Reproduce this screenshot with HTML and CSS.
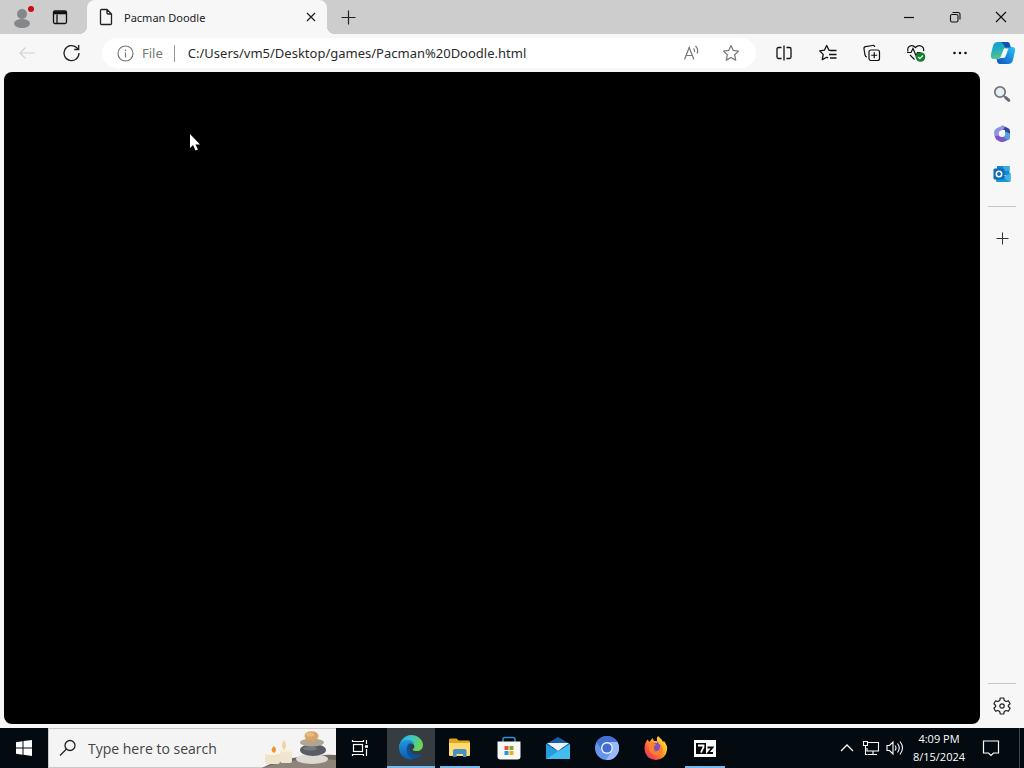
FILE: index.html
```html
<!DOCTYPE html>
<html lang="en">
<head>
<meta charset="utf-8">
<title>Pacman Doodle</title>
<link rel="stylesheet" href="styles.css">
</head>
<body>
<header class="titlebar">
  <button class="profile" aria-label="Profile">
    <svg width="24" height="24" viewBox="0 0 24 24"><circle cx="11" cy="9" r="5" fill="#85878a"/><ellipse cx="11" cy="18.500" rx="8" ry="4.500" fill="#85878a"/><circle cx="20" cy="4" r="3" fill="#c50b17"/></svg>
  </button>
  <button class="workspaces" aria-label="Tab actions">
    <svg width="16" height="16" viewBox="0 0 16 16" fill="none" stroke="#111" stroke-width="1.300"><rect x="1.500" y="2" width="13" height="12.500" rx="1.500"/><path d="M5 5.500v9"/><path d="M2 3.800h12" stroke-width="3"/></svg>
  </button>
  <div class="tab">
    <svg width="16" height="18" viewBox="0 0 16 18" fill="none" stroke="#222" stroke-width="1.300" stroke-linejoin="round"><path d="M3.500 1.500h5.500l4.500 4.500v9.500q0 1-1 1h-9q-1 0-1-1v-13q0-1 1-1zM9 1.500v3.500q0 1 1 1h3.500"/></svg>
    <span class="tab-title">Pacman Doodle</span>
    <button class="tab-close" aria-label="Close tab"><svg width="10" height="10" viewBox="0 0 10 10" stroke="#222" stroke-width="1.300"><path d="M1 1l8 8M9 1l-8 8"/></svg></button>
  </div>
  <button class="new-tab" aria-label="New tab"><svg width="15" height="15" viewBox="0 0 15 15" stroke="#222" stroke-width="1.200"><path d="M7.500 .500v14M.500 7.500h14"/></svg></button>
  <div class="window-buttons">
    <button aria-label="Minimize"><svg width="12" height="12" viewBox="0 0 12 12" stroke="#111" stroke-width="1.200"><path d="M1 6.500h10"/></svg></button>
    <button aria-label="Restore"><svg width="12" height="12" viewBox="0 0 12 12" fill="none" stroke="#111" stroke-width="1.100"><rect x="1.500" y="3.500" width="7.500" height="7.500" rx="1.500"/><path d="M3.500 1.500h5.500q2 0 2 2v5"/></svg></button>
    <button aria-label="Close"><svg width="12" height="12" viewBox="0 0 12 12" stroke="#111" stroke-width="1.200"><path d="M1 1l10 10M11 1l-10 10"/></svg></button>
  </div>
</header>

<nav class="toolbar">
  <button class="tool" aria-label="Back" disabled><svg width="18" height="16" viewBox="0 0 18 16" fill="none" stroke="#d2d2d2" stroke-width="1.200"><path d="M17 8h-15M7.500 2.500l-5.500 5.500 5.500 5.500"/></svg></button>
  <button class="tool" aria-label="Refresh"><svg width="18" height="18" viewBox="0 0 18 18" fill="none" stroke="#222" stroke-width="1.300"><path d="M17 9a7.500 7.500 0 1 1-2.500-5.500l2 2M16.700 1v4.500h-4.500"/></svg></button>
  <div class="address">
    <svg width="17" height="17" viewBox="0 0 17 17" fill="none" stroke="#777" stroke-width="1.200"><circle cx="8.500" cy="8.500" r="7.500"/><path d="M8.500 7.500v5M8.500 4.500v1.500"/></svg>
    <label class="scheme" for="url">File</label>
    <input class="url" id="url" type="text" value="C:/Users/vm5/Desktop/games/Pacman%20Doodle.html">
    <button class="address-tool" aria-label="Read aloud"><svg width="17" height="17" viewBox="0 0 17 17" fill="none" stroke="#777" stroke-width="1.200"><path d="M1.500 14.500l4.700-12 4.700 12M3.200 10.500h6"/><path d="M10.500 3.500q1.500 1.500 1 3.500M12.500 1q3.500 3.500 1.500 7.500"/></svg></button>
    <button class="address-tool" aria-label="Add to favorites"><svg width="18" height="18" viewBox="0 0 18 18" fill="none" stroke="#777" stroke-width="1.200" stroke-linejoin="round"><path d="M9 1.500l2.300 4.900 5.200.700-3.800 3.700 1 5.300-4.700-2.600-4.700 2.600 1-5.300-3.800-3.700 5.200-.700z"/></svg></button>
  </div>
  <div class="tools">
    <button class="tool" aria-label="Split screen"><svg width="18" height="18" viewBox="0 0 18 18" fill="none" stroke="#111" stroke-width="1.300"><path d="M6.500 3.500h-3q-1.500 0-1.500 1.500v8q0 1.500 1.500 1.500h3M11.500 3.500h3q1.500 0 1.500 1.500v8q0 1.500-1.500 1.500h-3M9 1.500v15"/></svg></button>
    <button class="tool" aria-label="Favorites"><svg width="18" height="18" viewBox="0 0 18 18" fill="none" stroke="#111" stroke-width="1.300" stroke-linejoin="round"><path d="M11.500 6.500l-1.500-.300-2.300-4.700-2.300 4.700-4.700.700 3.500 3.500-.900 5.200 4.400-2.400 1.500.800M11 6.500h6.500M10 10.500h7.500M11 14h6.500"/></svg></button>
    <button class="tool" aria-label="Collections"><svg width="18" height="18" viewBox="0 0 18 18" fill="none" stroke="#111" stroke-width="1.200"><rect x="6" y="6" width="10.500" height="10.500" rx="2"/><path d="M11.250 8.200v6M8.200 11.250h6M4 13q-1.500 0-2-2l-1-6q-.300-2 1.500-2.300l7-1.200q2-.300 2.300 1.500"/></svg></button>
    <button class="tool" aria-label="Browser essentials"><svg width="20" height="18" viewBox="0 0 20 18" fill="none" stroke="#111" stroke-width="1.200"><path d="M2 7.500q-1-3.800 1.500-5.300 3.500-1.500 6 1.300 2.500-2.800 6-1.300 3 1.500 2 5M1 8.500h4l2-4 3 7 1.500-3h3M4 11l4.500 4.500"/><circle cx="14.500" cy="13" r="4.800" fill="#167c32" stroke="none"/><path d="M12.200 13l1.700 1.700 3-3.200" stroke="#e7ffe7"/></svg></button>
    <button class="tool" aria-label="Settings and more"><svg width="16" height="6" viewBox="0 0 16 6" fill="#111"><circle cx="2.500" cy="3" r="1.300"/><circle cx="8" cy="3" r="1.300"/><circle cx="13.500" cy="3" r="1.300"/></svg></button>
  </div>
  <button class="copilot" aria-label="Copilot">
    <svg width="26" height="24" viewBox="0 0 26 24"><defs><linearGradient id="cp1" x1="0" y1="0" x2=".3" y2="1"><stop offset="0" stop-color="#1598dc"/><stop offset=".5" stop-color="#22b0bd"/><stop offset="1" stop-color="#55c787"/></linearGradient><linearGradient id="cp2" x1="1" y1="0" x2="0" y2="1"><stop offset="0" stop-color="#31c7f3"/><stop offset=".5" stop-color="#1987df"/><stop offset="1" stop-color="#1450bb"/></linearGradient></defs><path d="M8 1h9q2.500 0 3 3l1 3h-4q-3 0-4 3l-2 5q-1 3-4 3h-3q-4 0-3-5l2-8q1-4 5-4z" fill="url(#cp1)"/><path d="M18 23h-8q-2.500 0-3-3l-.500-2q5 0 6.500-4l2-6q1-2 4-2h3q4 0 3 4l-2 9q-1 4-5 4z" fill="url(#cp2)"/><path d="M14 7.500h4.500l-3 8q-.500 1.500-2.500 1.500h-3q2-1 2.500-3z" fill="#f3f9fc"/><path d="M11 1h6q2.500 0 3 3l.700 2.500h-5.700q-1-4-4-5.500z" fill="#174fb1"/></svg>
  </button>
</nav>

<div class="workspace">
  <main class="page" aria-label="Pacman Doodle"></main>
  <aside class="sidebar">
    <button aria-label="Search"><svg width="18" height="18" viewBox="0 0 18 18" fill="none"><circle cx="7" cy="7" r="5.200" fill="#e6f0f5" stroke="#75777a" stroke-width="1.800"/><path d="M11 11l2.500 2.500" stroke="#75777a" stroke-width="2"/><path d="M13 12.800l2.800 2.500" stroke="#686478" stroke-width="3" stroke-linecap="round"/></svg></button>
    <button aria-label="Microsoft 365"><svg width="18" height="18" viewBox="0 0 18 18"><path d="M9 .500l6 2.500q2 1 2 3v4l-5-3.300v-1.500l-4-1z" fill="#30479b"/><path d="M10 .500l-6 2.500q-3 1.500-3 5 0 4 3 5.500l3-2q-1-.600-1-2v-2.500l4-2.500q3-2 0-4z" fill="#8f95e4"/><path d="M2 11l5-.500q3 1.500 5-1.500v-2.500l5 2v3q0 2.500-2 3.500l-4 1.700q-2 .800-4 0l-3.500-2q-1.500-1-1.500-3.700z" fill="#8057c8"/><path d="M12 6.500l5 2.300v3.200q0 2-2 3l-4.500-2.700 1.500-1.800z" fill="#48a6dc"/><circle cx="9" cy="8.800" r="3.200" fill="#f7f7f7"/></svg></button>
    <button aria-label="Outlook"><svg width="18" height="18" viewBox="0 0 18 18"><path d="M4 1h12.500v9h-12.500z" fill="#1687c9"/><path d="M10 1h6.500v5h-6.500z" fill="#37a9e4"/><path d="M3 8l7 4 7.500-4v7.500q0 1.500-1.500 1.500h-11.500q-1.500 0-1.500-1.500z" fill="#1597dd"/><path d="M17.500 8v7.500q0 1.500-1.500 1.500l-6-4.700z" fill="#43afe4"/><rect y="3.500" x=".5" width="11" height="11" rx="1.500" fill="#0c6bb5"/><circle cx="6" cy="9" r="2.700" fill="none" stroke="#fff" stroke-width="1.600"/></svg></button>
    <hr>
    <button class="add" aria-label="Customize"><svg width="13" height="13" viewBox="0 0 13 13" stroke="#333" stroke-width="1"><path d="M6.500 .500v12M.500 6.500h12"/></svg></button>
    <hr class="bottom-rule">
    <button class="settings" aria-label="Settings"><svg width="18" height="18" viewBox="0 0 18 18" fill="none" stroke="#222" stroke-width="1.200" stroke-linejoin="round"><path d="M7.300 1h3.400l.6 2.500 1.700 1 2.400-.700 1.700 3-1.800 1.700v1l1.800 1.700-1.700 3-2.400-.700-1.700 1-.6 2.500h-3.400l-.6-2.500-1.700-1-2.400.700-1.700-3 1.800-1.700v-1l-1.800-1.700 1.700-3 2.400.700 1.700-1z"/><circle cx="9" cy="9" r="2.200"/></svg></button>
  </aside>
</div>

<footer class="taskbar">
  <button class="start" aria-label="Start"><svg width="16" height="16" viewBox="0 0 16 16" fill="#fff"><path d="M0 2.200l6.500-.900v6.200h-6.500zM7.500 1.100l8.500-1.100v7.500h-8.500zM0 8.500h6.500v6.200l-6.500-.900zM7.500 8.500h8.500v7.500l-8.500-1.200z"/></svg></button>
  <div class="search">
    <svg class="search-icon" width="18" height="18" viewBox="0 0 18 18" fill="none" stroke="#222" stroke-width="1.300"><circle cx="11" cy="6.500" r="5"/><path d="M7.500 10l-6.500 6.500"/></svg>
    <input type="text" placeholder="Type here to search" aria-label="Type here to search">
    <svg class="stones" width="74" height="40" viewBox="0 0 74 40"><path d="M0 40q14-8 37-11 24-3 37-2v13z" fill="#70675e"/><path d="M0 40q18-6 38-8 20-2 36 0v8z" fill="#8d847a"/><rect x="3" y="25" width="15" height="11" rx="2" fill="#eee3cc"/><ellipse cx="10.500" cy="25.500" rx="7.500" ry="1.500" fill="#fff6dd"/><rect x="18" y="22" width="12" height="13" rx="2" fill="#f0e5d2"/><ellipse cx="24" cy="23" rx="6" ry="1.500" fill="#faedd3"/><path d="M12 18q4 4 0 7-5-3 0-7z" fill="#ef942c"/><path d="M22 12q4 6 0 10-4-4 0-10z" fill="#efd4a2"/><ellipse cx="50" cy="31" rx="16" ry="5" fill="#ddd9d3"/><ellipse cx="51" cy="22" rx="13" ry="6" fill="#5a5c65"/><ellipse cx="48" cy="20.500" rx="7" ry="2" fill="#777981"/><ellipse cx="50" cy="14.500" rx="12" ry="4" fill="#b1a58d"/><ellipse cx="49.500" cy="8" rx="7" ry="4.800" fill="#d9a466"/><ellipse cx="48" cy="6.500" rx="4" ry="2" fill="#e6bd83"/></svg>
  </div>
  <button class="task" aria-label="Task view"><svg width="18" height="18" viewBox="0 0 18 18" fill="none" stroke="#fff" stroke-width="1.200"><rect x="2.500" y="5.500" width="9" height="7"/><path d="M1.500 1v1.500h11v-1.500M1.500 17v-1.500h11v1.500M15.500 1v4M15.500 10v7"/><path d="M14 7.500h3" stroke-width="2.500"/></svg></button>
  <div class="apps">
    <button class="task active" aria-label="Microsoft Edge"><svg width="26" height="26" viewBox="0 0 26 26"><defs><linearGradient id="edge1" x1="0" y1="0" x2="1" y2=".3"><stop offset="0" stop-color="#23a3df"/><stop offset=".5" stop-color="#38c5cf"/><stop offset="1" stop-color="#69d753"/></linearGradient><linearGradient id="edge2" x1="0" y1="0" x2="0" y2="1"><stop offset="0" stop-color="#2096df"/><stop offset="1" stop-color="#0c5bb1"/></linearGradient></defs><path d="M1 13c1-7 6-12 12-12 7 0 12 5 12 10 0 4-3 6-6 6-4 0-5-1-4-2 3-2 1-6-3-6-5 0-9 2-11 6z" fill="url(#edge1)"/><path d="M1 13c0-4 4-7 9-7 3 0 6 2 6 4-4-1-7 2-7 6 0 4 3 8 7 9-8 2-15-3-15-12z" fill="url(#edge2)"/><path d="M12 9c-5 3-5 11 2 15 4 2 8-1 10-4-5 2-10 0-12-4-1-3 0-5 2-6z" fill="#0c5097"/></svg></button>
    <button class="task open" aria-label="File Explorer"><svg width="22" height="20" viewBox="0 0 22 20"><path d="M0 2q0-1.500 1.500-1.500h6l2 2h10q1.500 0 1.500 1.500v12h-21z" fill="#e3a719"/><path d="M0 5h21v12q0 1-1 1h-19q-1 0-1-1z" fill="#ffdc72"/><path d="M4 19v-6q0-2 2-2h9.500q2 0 2 2v6h-3.500v-3h-6.500v3z" fill="#4a8fc3"/></svg></button>
    <button class="task" aria-label="Microsoft Store"><svg width="24" height="24" viewBox="0 0 24 24"><path d="M6 6v-2.500q0-2 2-2h8q2 0 2 2v2.500" fill="none" stroke="#2d91d0" stroke-width="1.500"/><path d="M.5 5.500h23v15q0 3-3 3h-17q-3 0-3-3z" fill="#f7f7f5"/><path d="M7.500 10h4v4h-4z" fill="#e45334"/><path d="M12.500 10h4v4h-4z" fill="#7bad2c"/><path d="M7.500 15h4v4h-4z" fill="#209cd3"/><path d="M12.500 15h4v4h-4z" fill="#eab020"/></svg></button>
    <button class="task" aria-label="Mail"><svg width="24" height="22" viewBox="0 0 24 22"><path d="M0 7l12-7 12 7v3h-24z" fill="#155faa"/><path d="M0 7l12 7 12-7v15h-24z" fill="#249cdf"/><path d="M0 22l24-15v15z" fill="#44bdf0"/><path d="M1 6h22l-11 8z" fill="#eff5fa"/></svg></button>
    <button class="task" aria-label="Chromium"><svg width="24" height="24" viewBox="0 0 24 24"><circle cx="12" cy="12" r="12" fill="#6795ed"/><path d="M1.600 6a12 12 0 0 1 20.800 0h-10.400a6 6 0 0 0-5.400 8z" fill="#426fd2"/><path d="M22.400 6a12 12 0 0 1-11.400 18l6-9a6 6 0 0 0-3-9z" fill="#9abaf7"/><circle cx="12" cy="12" r="6" fill="#eaf2ff"/><circle cx="12" cy="12" r="4.600" fill="#416fd0"/></svg></button>
    <button class="task" aria-label="Firefox"><svg width="24" height="24" viewBox="0 0 24 24"><defs><linearGradient id="fox" x1="1" y1="0" x2="0" y2="1"><stop offset="0" stop-color="#fff04a"/><stop offset=".4" stop-color="#ffad26"/><stop offset=".7" stop-color="#fa5540"/><stop offset="1" stop-color="#df258a"/></linearGradient></defs><path d="M3.500 3.500l2 2.500 3-4 1.500 3 3 0q-1-3 1-5l4 4 1 2 1-1q4 5 3 9-1 9-11 10-11-1-11.500-11 0-6 3-9.500z" fill="url(#fox)"/><circle cx="12" cy="12" r="5" fill="#784bc7"/><path d="M5 8q3-3 6 0l3 1q-1 2-4 2-1 3 3 3 4-1 3-6 5 4 1 9-5 4-10 0-3-4-2-9z" fill="#ff802c"/><path d="M10 10q4-2 3-5 4 4 2 9-2 2-5 1 3-2 0-5z" fill="#8151bd"/></svg></button>
    <button class="task open" aria-label="7-Zip"><svg width="22" height="17" viewBox="0 0 22 17"><rect width="22" height="17" fill="#fff"/><path d="M2 3h10v11h-10z" fill="#080808"/><path d="M4 5.500h5.500v1.500l-2.500 5.500" fill="none" stroke="#fff" stroke-width="1.800"/><path d="M13.500 7.500h5l-4.500 5.500h5" fill="none" stroke="#080808" stroke-width="1.800"/></svg></button>
  </div>
  <div class="tray">
    <button aria-label="Show hidden icons"><svg width="14" height="8" viewBox="0 0 14 8" fill="none" stroke="#fff" stroke-width="1.300"><path d="M1 7l6-6 6 6"/></svg></button>
    <button aria-label="Network"><svg width="18" height="16" viewBox="0 0 18 16" fill="none" stroke="#fff" stroke-width="1.100"><path d="M6 2.500h10.500v8.500h-11.500v-3M11 11v3M6 14.500h9M1.500 1.500h4v4h-4zM3.500 5.500v9h2"/></svg></button>
    <button aria-label="Volume"><svg width="18" height="16" viewBox="0 0 18 16" fill="none" stroke="#fff" stroke-width="1.100"><path d="M1 5.500h2.500l3.500-3.500v12l-3.500-3.500h-2.500zM9 5.500q2 2.500 0 5M11.500 3.500q3.500 4.500 0 9M14 1.500q5 6.500 0 13"/></svg></button>
    <button class="clock"><span>4:09 PM</span><span>8/15/2024</span></button>
    <button class="notify" aria-label="Notifications"><svg width="18" height="18" viewBox="0 0 18 18" fill="none" stroke="#fff" stroke-width="1.200"><path d="M1.500 2h15v12h-5l-2.500 2.500-2.500-2.500h-5z"/></svg></button>
    <button class="desktop" aria-label="Show desktop"></button>
  </div>
</footer>
<svg class="cursor" width="13" height="20" viewBox="0 0 13 20" fill="#fff"><path d="M1 1v14l3-3 2.500 5.500 2.500-1-2.500-5h4.500z"/></svg>
</body>
</html>
```
FILE: styles.css
```css
* { box-sizing: border-box; }

body {
  margin: 0;
  height: 100vh;
  display: flex;
  flex-direction: column;
  overflow: hidden;
  background: #f7f7f7;
  font-family: "Open Sans", "Noto Sans", sans-serif;
  color: #1b1b1b;
}

button {
  display: flex;
  align-items: center;
  justify-content: center;
  flex: none;
  margin: 0;
  padding: 0;
  border: 0;
  background: none;
  color: inherit;
  font: inherit;
}

svg { display: block; flex: none; }

input {
  min-width: 0;
  padding: 0;
  border: 0;
  outline: 0;
  background: none;
  font: inherit;
}

.titlebar {
  flex: none;
  height: 34px;
  display: flex;
  background: #cdcdcd;
}

.profile { width: 46px; }
.workspaces { width: 28px; }

.tab {
  position: relative;
  width: 240px;
  margin-left: 13px;
  padding: 0 8px 0 11px;
  display: flex;
  align-items: center;
  border-radius: 8px 8px 0 0;
  background: #f7f7f7;
  font-family: "Noto Sans", sans-serif;
  font-size: 11px;
}

.tab::before,
.tab::after {
  content: "";
  position: absolute;
  bottom: 0;
  width: 8px;
  height: 8px;
}

.tab::before {
  right: 100%;
  background: radial-gradient(circle at 0 0, #cdcdcd 8px, #f7f7f7 8px);
}

.tab::after {
  left: 100%;
  background: radial-gradient(circle at 100% 0, #cdcdcd 8px, #f7f7f7 8px);
}

.tab-title { flex: 1; margin-left: 10px; }
.tab-close { width: 16px; height: 24px; }
.new-tab { width: 42px; }

.window-buttons { display: flex; margin-left: auto; }
.window-buttons button { width: 46px; }

.toolbar {
  flex: none;
  height: 38px;
  padding-left: 5px;
  display: flex;
  align-items: center;
}

.tool { width: 44px; height: 32px; }
.tools { display: flex; }
.copilot { width: 42px; height: 32px; }

.address {
  flex: 1;
  height: 30px;
  margin: 0 6px 0 9px;
  padding: 0 5px 0 15px;
  display: flex;
  align-items: center;
  border-radius: 15px;
  background: #fff;
  font-family: "Noto Sans", sans-serif;
  font-size: 13px;
}

.scheme {
  margin-left: 8px;
  padding-right: 11px;
  border-right: 1px solid #999;
  line-height: 17px;
  color: #767676;
}

.url { flex: 1; margin-left: 13px; color: #2b2b2b; }
.address-tool { width: 40px; height: 28px; }

.workspace {
  flex: 1;
  min-height: 0;
  display: flex;
}

.page {
  flex: 1;
  margin: 0 0 4px 4px;
  border-radius: 8px;
  background: #000;
}

.sidebar {
  width: 44px;
  padding-top: 2px;
  display: flex;
  flex-direction: column;
  align-items: center;
}

.sidebar button { width: 40px; height: 40px; }

.sidebar hr {
  width: 28px;
  height: 1px;
  margin: 12px 0 0;
  border: 0;
  background: #c6c6c6;
}

.sidebar .add { margin-top: 11px; }
.sidebar .bottom-rule { margin-top: auto; }
.sidebar .settings { height: 44px; }

.taskbar {
  flex: none;
  height: 40px;
  display: flex;
  background: #030a10;
  color: #fff;
}

.start { width: 48px; }

.search {
  width: 288px;
  padding-left: 10px;
  display: flex;
  align-items: center;
  border: 1px solid #c9c9c9;
  border-right: 0;
  background: #f4f4f4;
  font-size: 14px;
}

.search input { flex: 1; margin-left: 11px; }
.search input::placeholder { color: #444; opacity: 1; }

.task { width: 48px; height: 40px; }
.apps { display: flex; gap: 1px; margin-left: 3px; }
.active { background: #373c41; border-bottom: 2px solid #76b9ed; }
.open { background: linear-gradient(#76b9ed, #76b9ed) center bottom / 40px 2px no-repeat; }

.tray { display: flex; margin-left: auto; }
.tray button { width: 24px; }

.tray .clock {
  width: 64px;
  flex-direction: column;
  font-size: 11px;
  line-height: 18px;
}

.tray .notify { width: 40px; }
.tray .desktop { width: 5px; margin-left: 8px; border-left: 1px solid #444; }

.cursor { position: absolute; left: 189px; top: 133px; }
```
